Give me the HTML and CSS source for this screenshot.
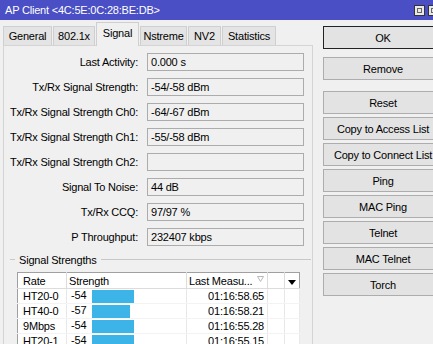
FILE: index.html
```html
<!DOCTYPE html>
<html lang="en">
<head>
    <meta charset="UTF-8">
    <meta name="viewport" content="width=device-width, initial-scale=1.0">
    <title>AP Client</title>
    <link rel="stylesheet" href="styles.css">
</head>
<body>
    <div class="titlebar">
        <span class="title">AP Client &lt;4C:5E:0C:28:BE:DB&gt;</span>
        <span class="win-btns"><span class="win-btn"></span><span class="win-btn"></span></span>
    </div>

    <div class="main">
        <div class="left">
            <div class="tabs">
                <div class="tab tab-general">General</div>
                <div class="tab tab-8021x">802.1x</div>
                <div class="tab tab-signal active">Signal</div>
                <div class="tab tab-nstreme">Nstreme</div>
                <div class="tab tab-nv2">NV2</div>
                <div class="tab tab-stats">Statistics</div>
            </div>

            <div class="panel">
                <div class="form">
                    <label>Last Activity:</label><div class="field">0.000 s</div>
                    <label>Tx/Rx Signal Strength:</label><div class="field">-54/-58 dBm</div>
                    <label>Tx/Rx Signal Strength Ch0:</label><div class="field">-64/-67 dBm</div>
                    <label>Tx/Rx Signal Strength Ch1:</label><div class="field">-55/-58 dBm</div>
                    <label>Tx/Rx Signal Strength Ch2:</label><div class="field"></div>
                    <label>Signal To Noise:</label><div class="field">44 dB</div>
                    <label>Tx/Rx CCQ:</label><div class="field">97/97 %</div>
                    <label>P Throughput:</label><div class="field">232407 kbps</div>
                </div>

                <div class="group-head"><span>Signal Strengths</span></div>

                <table class="grid">
                    <thead>
                        <tr>
                            <th class="c-rate">Rate</th>
                            <th class="c-strength">Strength</th>
                            <th class="c-last">Last Measu... <svg class="sort" width="7" height="6" viewBox="0 0 7 6"><path d="M0.5 0.5 H6.5 L3.5 5.5 Z" fill="none" stroke="#b8b8b8"/></svg></th>
                            <th class="c-empty"></th>
                            <th class="c-menu"><svg width="8" height="5" viewBox="0 0 8 5"><path d="M0 0 H8 L4 5 Z" fill="#000"/></svg></th>
                        </tr>
                    </thead>
                    <tbody>
                        <tr>
                            <td>HT20-0</td>
                            <td><span class="num">-54</span><span class="bar" style="width:42px"></span></td>
                            <td class="time">01:16:58.65</td><td></td><td></td>
                        </tr>
                        <tr>
                            <td>HT40-0</td>
                            <td><span class="num">-57</span><span class="bar" style="width:38px"></span></td>
                            <td class="time">01:16:58.21</td><td></td><td></td>
                        </tr>
                        <tr>
                            <td>9Mbps</td>
                            <td><span class="num">-54</span><span class="bar" style="width:42px"></span></td>
                            <td class="time">01:16:55.28</td><td></td><td></td>
                        </tr>
                        <tr>
                            <td>HT20-1</td>
                            <td><span class="num">-54</span><span class="bar" style="width:42px"></span></td>
                            <td class="time">01:16:55.15</td><td></td><td></td>
                        </tr>
                    </tbody>
                </table>
            </div>
        </div>

        <div class="buttons">
            <button class="btn default">OK</button>
            <button class="btn remove">Remove</button>
            <button class="btn reset">Reset</button>
            <button class="btn">Copy to Access List</button>
            <button class="btn">Copy to Connect List</button>
            <button class="btn">Ping</button>
            <button class="btn">MAC Ping</button>
            <button class="btn">Telnet</button>
            <button class="btn">MAC Telnet</button>
            <button class="btn">Torch</button>
        </div>
    </div>
</body>
</html>
```

FILE: styles.css
```css
body {
    margin: 0;
    width: 433px;
    height: 344px;
    overflow: hidden;
    background: #f0f0f0;
    font-family: 'Liberation Sans', Arial, sans-serif;
    font-size: 11px;
    letter-spacing: -0.2px;
    color: #000;
}
.titlebar {
    height: 20px;
    background: #4a4fc6;
    color: #fff;
    display: flex;
    align-items: center;
    justify-content: space-between;
    padding-left: 5px;
}
.win-btns {
    display: flex;
    gap: 3px;
    margin-right: -6px;
}
.win-btn {
    width: 9px;
    height: 9px;
    border: 1px solid #333;
    background: #e8e8e8;
    box-shadow: inset 0 0 0 2px #e8e8e8, inset 0 0 0 3px #666;
}
.main {
    display: flex;
    gap: 10px;
    padding: 2px 0 0 3px;
}
.left {
    width: 310px;
    flex: none;
}
.tabs {
    height: 23px;
    display: flex;
    align-items: flex-end;
    position: relative;
    z-index: 1;
}
.tab {
    height: 19px;
    line-height: 18px;
    border: 1px solid #cfcfcf;
    border-bottom: none;
    background: #e4e4e4;
    text-align: center;
    margin-right: 1px;
    box-sizing: border-box;
}
.tab-general { width: 49px; }
.tab-8021x { width: 42px; }
.tab-signal { width: 43px; }
.tab-nstreme { width: 47px; }
.tab-nv2 { width: 33px; }
.tab-stats { width: 54px; }
.tab.active {
    height: 24px;
    line-height: 20px;
    background: #f0f0f0;
    margin-bottom: -1px;
}
.panel {
    border: 1px solid #d4d4d4;
    height: 320px;
    box-sizing: border-box;
}
.form {
    display: grid;
    grid-template-columns: 134px 157px;
    column-gap: 9px;
    row-gap: 7px;
    padding-top: 7px;
}
.form label {
    text-align: right;
    line-height: 18px;
}
.field {
    height: 18px;
    line-height: 16px;
    box-sizing: border-box;
    border: 1px solid #acacac;
    padding-left: 3px;
    background: #f0f0f0;
}
.group-head {
    display: flex;
    align-items: center;
    gap: 4px;
    margin: 7px 1px 0 6px;
    height: 13px;
}
.group-head::before {
    content: "";
    width: 5px;
    border-top: 1px solid #c8c8c8;
}
.group-head::after {
    content: "";
    flex: 1;
    border-top: 1px solid #c8c8c8;
}
.grid {
    margin: 6px 0 0 13px;
    border-collapse: collapse;
    background: #fff;
    width: 282px;
    table-layout: fixed;
    border: 1px solid #a0a0a0;
}
.grid th,
.grid td {
    box-sizing: border-box;
    white-space: nowrap;
    overflow: hidden;
}
.grid th {
    height: 16px;
    padding: 0 2px;
    text-align: left;
    font-weight: normal;
    border-right: 1px solid #dcdcdc;
    border-bottom: 1px solid #dcdcdc;
}
.grid th.c-rate {
    padding-left: 5px;
}
.c-rate { width: 49px; }
.c-strength { width: 120px; }
.c-last { width: 81px; }
.c-empty { width: 17px; }
.c-menu { width: 15px; }
.grid th.c-menu {
    padding: 0;
    text-align: center;
    border-right: none;
}
.sort {
    margin-left: 2px;
    vertical-align: 3px;
}
.grid td {
    height: 15px;
    padding: 0 4px;
    border-right: 1px solid #e8e8e8;
    border-bottom: 1px solid #f3f3f3;
}
.grid td:first-child {
    padding-left: 5px;
}
.grid td.time {
    text-align: right;
    padding-right: 3px;
}
.num {
    display: inline-block;
    width: 21px;
}
.bar {
    display: inline-block;
    height: 13px;
    background: #3cb4e8;
    vertical-align: middle;
}
.buttons {
    display: flex;
    flex-direction: column;
    gap: 3px;
    padding-top: 4px;
}
.btn {
    width: 120px;
    height: 23px;
    font-family: inherit;
    font-size: 11px;
    letter-spacing: -0.2px;
    background: #e3e3e3;
    border: 1px solid #adadad;
    padding: 0;
    margin: 0;
}
.btn.default {
    border-color: #222;
    margin-bottom: 5px;
}
.btn.reset {
    margin-top: 8px;
}
```
